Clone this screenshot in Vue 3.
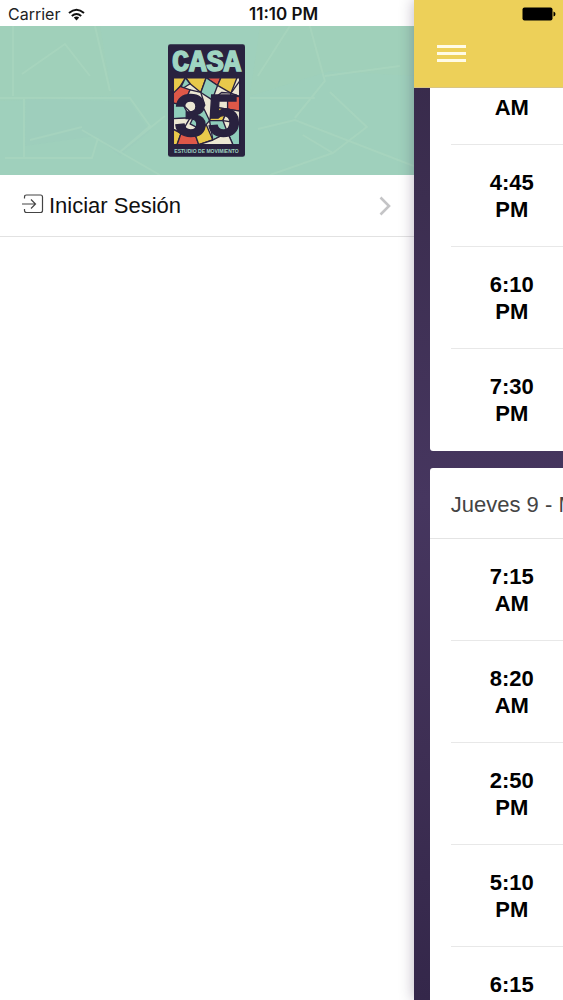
<script setup>
const wednesday = [
  ['AM'],
  ['4:45', 'PM'],
  ['6:10', 'PM'],
  ['7:30', 'PM']
]
const thursday = [
  ['7:15', 'AM'],
  ['8:20', 'AM'],
  ['2:50', 'PM'],
  ['5:10', 'PM'],
  ['6:15']
]
</script>

<template>
  <div class="app">
    <aside class="drawer">
      <div class="status">
        <span class="carrier">Carrier</span>
        <svg class="wifi" viewBox="0 0 17 13" aria-hidden="true">
          <g fill="none" stroke="#111" stroke-width="2">
            <path d="M1 5Q8.500-1.500 16 5" />
            <path d="M3.800 8Q8.500 4 13.200 8" />
          </g>
          <path d="M5.800 9.600Q8.500 7.600 11.200 9.600L8.500 12.500Z" fill="#111" />
        </svg>
        <time class="clock">11:10 PM</time>
      </div>

      <div class="banner">
        <svg class="texture" viewBox="0 0 414 149" preserveAspectRatio="none" aria-hidden="true">
          <path d="M0 0H100L112 70L0 75ZM260 0H414V50L330 45L250 70Z" fill="#a5d4b3" opacity=".2" />
          <path d="M26 72L130 76L150 105L120 130L95 110L25 120Z" fill="#9bcabd" opacity=".3" />
          <g fill="none" stroke="#b6dfc5" stroke-width="2" opacity=".3">
            <path d="M13 0V70M0 72H130L150 100L120 126L82 104M24 72V132M5 132H92L98 112M30 114L82 101M120 126L165 90M120 126L160 149M95 0L110 65M22 48L65 18L90 50" />
            <path d="M250 72H315M258 103L295 94L414 140M303 109L333 127L367 101L330 66M333 127L270 149M325 50L400 40M310 0L325 55L295 92M258 50L290 0" />
          </g>
        </svg>
        <svg class="logo" viewBox="26 22 230 336" role="img" aria-label="Casa 35 Estudio de Movimiento">
          <rect x="26" y="22" width="230" height="336" rx="7" fill="#29223f" />
          <text class="casa" x="141" y="101" text-anchor="middle">CASA</text>
          <g stroke="#29223f" stroke-width="4" stroke-linejoin="round">
            <path d="M42 122H240V322H42Z" fill="#ece7d3" />
            <path d="M42 122H78L50 168H42Z" fill="#e9c94b" />
            <path d="M78 122H140L124 166L92 140Z" fill="#e9c94b" />
            <path d="M78 122L92 140L60 160Z" fill="#8fcdbb" />
            <path d="M42 168L62 148L92 158L72 204L42 198Z" fill="#df5848" />
            <path d="M140 122H184L174 145Z" fill="#df5848" />
            <path d="M184 122H232L214 168L174 145Z" fill="#e9c94b" />
            <path d="M140 122L174 145L158 188L124 166Z" fill="#8fcdbb" />
            <path d="M240 132V178L214 168Z" fill="#ece7d3" />
            <path d="M158 188L186 166L214 168L204 216L164 210Z" fill="#ece7d3" />
            <path d="M204 176L240 178V222L204 216Z" fill="#df5848" />
            <path d="M42 198L72 204L92 242L42 244Z" fill="#8fcdbb" />
            <path d="M92 158L124 166L136 204L104 236L72 204Z" fill="#ece7d3" />
            <path d="M42 244L92 242L65 288L42 276Z" fill="#ece7d3" />
            <path d="M42 276L65 288L53 322H42Z" fill="#e9c94b" />
            <path d="M65 288L108 294L118 322H53Z" fill="#df5848" />
            <path d="M104 236L134 216L150 250L126 278L92 260Z" fill="#8fcdbb" />
            <path d="M150 250L164 210L204 216L190 250Z" fill="#e9c94b" />
            <path d="M126 278L140 262L160 308L118 322L108 294Z" fill="#e9c94b" />
            <path d="M150 250L190 250L204 286L160 308Z" fill="#8fcdbb" />
            <path d="M204 216L240 222V258L190 250Z" fill="#ece7d3" />
            <path d="M204 286L240 258V322H220Z" fill="#8fcdbb" />
            <path d="M160 308L204 286L220 322H118Z" fill="#ece7d3" />
          </g>
          <text class="number" x="143" y="295" text-anchor="middle">35</text>
          <text class="tagline" x="141" y="346" text-anchor="middle">ESTUDIO DE MOVIMIENTO</text>
        </svg>
      </div>

      <nav>
        <a class="login" href="#">
          <svg class="enter" viewBox="0 0 22 20" aria-hidden="true">
            <path d="M2.500 4.500V3Q2.500 1 4.500 1H18.500Q20.500 1 20.500 3V16.500Q20.500 18.500 18.500 18.500H4.500Q2.500 18.500 2.500 16.500V15M0 10H13M9 5.500L13.500 10L9 14.500" fill="none" stroke="#444" stroke-width="1.200" />
          </svg>
          <span>Iniciar Sesión</span>
          <svg class="chevron" viewBox="0 0 12 20" aria-hidden="true">
            <path d="M1.500 1.500L10 10L1.500 18.500" fill="none" stroke="#c4c4c6" stroke-width="2.600" />
          </svg>
        </a>
      </nav>
    </aside>

    <main class="panel">
      <header class="topbar">
        <svg class="battery" viewBox="0 0 34 14" aria-hidden="true">
          <rect x=".5" y=".5" width="30" height="13" rx="2" fill="#000" />
          <path d="M31.500 4.500Q33.500 5 33.500 7T31.500 9.500Z" fill="#000" />
        </svg>
        <button class="burger" type="button" aria-label="Menú">
          <i></i><i></i><i></i>
        </button>
      </header>

      <div class="schedule">
        <section class="card previous">
          <ul>
            <li v-for="(slot, i) in wednesday" :key="i">
              <time><span v-for="part in slot" :key="part">{{ part }}</span></time>
            </li>
          </ul>
        </section>
        <section class="card next">
          <h2>Jueves 9 - M</h2>
          <ul>
            <li v-for="(slot, i) in thursday" :key="i">
              <time><span v-for="part in slot" :key="part">{{ part }}</span></time>
            </li>
          </ul>
        </section>
      </div>
    </main>
  </div>
</template>

<style>
body {
  margin: 0;
  background: #fff;
}
</style>

<style scoped>
* {
  box-sizing: border-box;
}
.app {
  display: flex;
  height: 100vh;
  overflow: hidden;
  font-family: "Liberation Sans", Arial, sans-serif;
  font-size: 22px;
  line-height: 27px;
  color: #000;
}
.drawer {
  flex: none;
  width: 73.5%;
  background: #fff;
}
.status {
  display: flex;
  align-items: center;
  gap: 8px;
  height: 26px;
  padding: 2px 0 0 8px;
  font-family: Inter, sans-serif;
  font-size: 16px;
  line-height: 24px;
  color: #222;
}
.wifi {
  width: 17px;
  height: 13px;
}
.clock {
  margin: 0 auto;
  padding-left: 60px;
  font-size: 17px;
  font-weight: 600;
  color: #111;
}
.banner {
  position: relative;
  display: flex;
  align-items: center;
  justify-content: center;
  height: 149px;
  background: #9fd0bc;
}
.texture {
  position: absolute;
  inset: 0;
  width: 100%;
  height: 100%;
}
.logo {
  position: relative;
  width: 77px;
  height: 113px;
}
.casa {
  font-family: "Liberation Mono", monospace;
  font-size: 86px;
  font-weight: 700;
  fill: #9fd5c2;
  stroke: #9fd5c2;
  stroke-width: 4px;
}
.number {
  font-family: "Liberation Sans", sans-serif;
  font-size: 176px;
  font-weight: 700;
  fill: #29223f;
  stroke: #29223f;
  stroke-width: 4px;
}
.tagline {
  font-family: "Liberation Sans", sans-serif;
  font-size: 15px;
  font-weight: 700;
  fill: #9fd5c2;
}
.login {
  display: flex;
  align-items: center;
  gap: 5px;
  height: 62px;
  padding: 0 23px 0 22px;
  border-bottom: 1px solid #e2e2e2;
  color: #111;
  text-decoration: none;
}
.enter {
  width: 22px;
  height: 20px;
  margin-bottom: 4px;
}
.chevron {
  width: 12px;
  height: 20px;
  margin-left: auto;
}
.panel {
  position: relative;
  display: flex;
  flex: 1;
  flex-direction: column;
  min-width: 0;
  background: linear-gradient(#362949, #3c2e50 20%, #46365f 50%, #3e2f54 75%, #34274a);
  box-shadow: 0 0 14px rgba(30, 10, 50, 0.3);
}
.topbar {
  display: flex;
  flex: none;
  flex-direction: column;
  align-items: flex-start;
  height: 88px;
  padding: 7px 7px 0 23px;
  background: #edd059;
  border-bottom: 1px solid #d9c583;
}
.battery {
  align-self: flex-end;
  width: 34px;
  height: 14px;
}
.burger {
  display: flex;
  flex-direction: column;
  gap: 4px;
  margin-top: 24px;
  padding: 0;
  border: 0;
  background: none;
}
.burger i {
  width: 29px;
  height: 3px;
  background: #fffbe6;
}
.schedule {
  display: flex;
  flex: 1;
  flex-direction: column;
  gap: 17px;
  min-height: 0;
  padding-left: 16px;
  overflow: hidden;
}
.card {
  flex: none;
  background: #fff;
  overflow: hidden;
}
.previous {
  border-bottom-left-radius: 3px;
}
.next {
  flex: 1 0 auto;
  border-top-left-radius: 3px;
}
h2 {
  margin: 0;
  padding: 23px 0 20px 21px;
  border-bottom: 1px solid #e4e4e4;
  font-size: 22px;
  font-weight: 400;
  white-space: nowrap;
  color: #444;
}
ul {
  margin: 0;
  padding: 0 0 0 21px;
  list-style: none;
}
li {
  padding: 24px 0 23px;
  border-bottom: 1px solid #e8e8e8;
}
.previous li:first-child {
  padding-top: 6px;
}
li:last-child {
  border-bottom-color: transparent;
}
li time {
  display: flex;
  flex-direction: column;
  align-items: center;
  width: 122px;
  font-weight: 700;
}
</style>
